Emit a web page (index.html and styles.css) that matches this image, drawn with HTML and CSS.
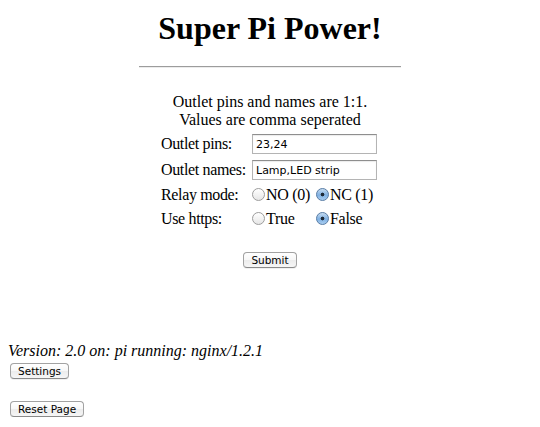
FILE: index.html
```html
<!DOCTYPE html>
<html>
<head>
<meta charset="utf-8">
<title>Super Pi Power!</title>
<link rel="stylesheet" href="styles.css">
</head>
<body>
<div class="main">
  <h1 class="title">Super Pi Power!</h1>
  <hr class="rule">
  <form class="form">
    <p class="note">Outlet pins and names are 1:1.<br>Values are comma seperated</p>
    <table class="settings">
      <tr class="r1">
        <td class="label">Outlet pins:</td>
        <td class="field" colspan="2"><input class="text" type="text" value="23,24"></td>
      </tr>
      <tr class="r2">
        <td class="label">Outlet names:</td>
        <td class="field" colspan="2"><input class="text" type="text" value="Lamp,LED strip"></td>
      </tr>
      <tr class="r3">
        <td class="label">Relay mode:</td>
        <td class="opt-a"><label class="opt"><input class="radio" type="radio" name="relay">NO (0)</label></td>
        <td class="opt-b"><label class="opt"><input class="radio" type="radio" name="relay" checked>NC (1)</label></td>
      </tr>
      <tr class="r4">
        <td class="label">Use https:</td>
        <td class="opt-a"><label class="opt"><input class="radio" type="radio" name="https">True</label></td>
        <td class="opt-b"><label class="opt"><input class="radio" type="radio" name="https" checked>False</label></td>
      </tr>
    </table>
    <div class="submit-row"><button class="btn" type="button">Submit</button></div>
  </form>
</div>
<div class="footer">
  <p class="version">Version: 2.0 on: pi running: nginx/1.2.1</p>
  <div class="btn-row"><button class="btn" type="button">Settings</button></div>
  <div class="btn-row reset-row"><button class="btn" type="button">Reset Page</button></div>
</div>
</body>
</html>
```
FILE: styles.css
```css
html, body {
  background: #fff;
}
body {
  margin: 8px;
  font-family: "Liberation Serif", "Times New Roman", serif;
  font-size: 16px;
  color: #000;
}
.main {
  text-align: center;
}
.title {
  margin: 2px 0 0;
  font-size: 32px;
  line-height: 37px;
  font-weight: bold;
}
.rule {
  width: 50%;
  height: 0;
  margin: 19px auto 0;
  border: 0;
  border-top: 1px solid #9c9c9c;
  border-bottom: 1px solid #ececec;
}
.form {
  margin: 0;
}
.note {
  margin: 25px 0 0;
  line-height: 18px;
}
.settings {
  margin: 2px auto 0;
  border-collapse: collapse;
  table-layout: fixed;
  width: 220px;
  text-align: left;
}
.settings td {
  padding: 0;
  vertical-align: middle;
  line-height: 18px;
  white-space: nowrap;
}
.settings td.label {
  width: 91px;
  padding-left: 1px;
  letter-spacing: -0.35px;
}
.r1 { height: 26px; }
.r2 { height: 26px; }
.r3 { height: 24px; }
.r4 { height: 23px; }
.opt-a {
  width: 68px;
}
.text {
  box-sizing: border-box;
  width: 125px;
  height: 20px;
  margin: 0;
  padding: 0 3px;
  border: 1px solid #b4b4b4;
  border-top-color: #8e8e8e;
  box-shadow: inset 0 1px 1px rgba(0,0,0,0.08);
  font-family: "DejaVu Sans", "Liberation Sans", sans-serif;
  font-size: 11px;
  color: #000;
  vertical-align: middle;
}
.opt {
  display: inline-block;
  letter-spacing: -0.3px;
}
.radio {
  -webkit-appearance: none;
  appearance: none;
  box-sizing: border-box;
  width: 13px;
  height: 13px;
  margin: 0 1px 0 0;
  border: 1px solid #9d9d9d;
  border-radius: 50%;
  background: linear-gradient(#ffffff, #e6e6e6);
  vertical-align: -1px;
}
.radio:checked {
  border-color: #5b7ea6;
  background:
    radial-gradient(circle at 50% 50%, #1e2a38 0, #1e2a38 1.6px, transparent 2.2px),
    linear-gradient(#c6dcf1, #7fb0e2 55%, #a9cdf0);
}
.submit-row {
  margin-top: 22px;
}
.btn {
  box-sizing: border-box;
  height: 16px;
  margin: 0;
  padding: 0 7px;
  border: 1px solid #a2a2a2;
  border-bottom-color: #8a8a8a;
  border-radius: 4px;
  background: linear-gradient(#ffffff, #f7f7f7 50%, #ececec 51%, #f6f6f6);
  box-shadow: 0 1px 0 rgba(0,0,0,0.06);
  font-family: "DejaVu Sans", "Liberation Sans", sans-serif;
  font-size: 10.5px;
  line-height: 13px;
  color: #000;
  vertical-align: top;
}
.footer {
  margin-top: 72px;
}
.version {
  margin: 0;
  font-style: italic;
  line-height: 18px;
}
.btn-row {
  margin: 3px 0 0 2px;
  height: 16px;
}
.reset-row {
  margin-top: 22px;
}
```
